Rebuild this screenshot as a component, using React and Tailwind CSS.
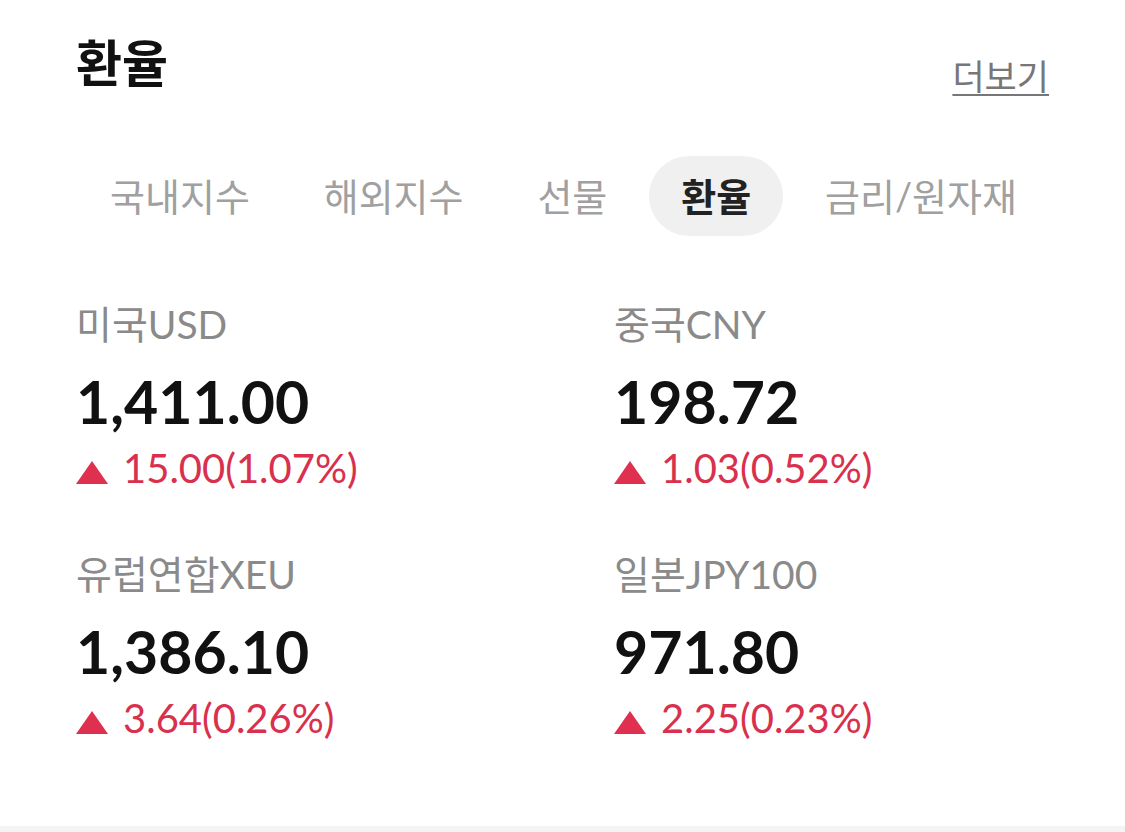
import React from 'react';

const tabs = ['국내지수', '해외지수', '선물', '환율', '금리/원자재'];

const rates = [
    { name: '미국USD', value: '1,411.00', change: '15.00(1.07%)' },
    { name: '중국CNY', value: '198.72', change: '1.03(0.52%)' },
    { name: '유럽연합XEU', value: '1,386.10', change: '3.64(0.26%)' },
    { name: '일본JPY100', value: '971.80', change: '2.25(0.23%)' },
];

const UpTriangle = () => (
    <svg width="32" height="23" viewBox="0 0 32 23" className="shrink-0 mt-[8px]">
        <path d="M16 0 L32 23 L0 23 Z" fill="#e0304f" />
    </svg>
);

export default function App() {
    return (
        <div className="w-full h-[832px] bg-white flex flex-col font-['Lato','Noto_Sans_CJK_KR',sans-serif]">
            <div className="flex-1 px-[76px]">
                {/* header */}
                <div className="flex justify-between items-start pt-[33px]">
                    <h1 className="text-[50px] font-bold leading-[60px] text-[#111]">환율</h1>
                    <a className="mt-[23px] text-[35px] leading-[40px] text-[#777] underline underline-offset-[4px] decoration-[2px]">더보기</a>
                </div>

                {/* tabs */}
                <div className="flex justify-between mt-[60px] pl-[2px]">
                    {tabs.map((t) => (
                        <div
                            key={t}
                            className={`h-[80px] px-[32px] flex items-center rounded-full text-[38px] ${t === '환율' ? 'bg-[#f0f0f0] text-[#222] font-bold' : 'text-[#a0a0a0]'}`}
                        >
                            {t}
                        </div>
                    ))}
                </div>

                {/* rates */}
                <div className="grid grid-cols-[538px_1fr] gap-y-[59px] mt-[63px]">
                    {rates.map((r) => (
                        <div key={r.name} className="flex flex-col">
                            <div className="text-[39px] leading-[50px] text-[#8a8a8a]">{r.name}</div>
                            <div className="mt-[21px] text-[59px] leading-[64px] font-bold text-[#111]">{r.value}</div>
                            <div className="mt-[12px] flex items-center gap-[15px] text-[40px] leading-[44px] text-[#d8304d]">
                                <UpTriangle />
                                <span>{r.change}</span>
                            </div>
                        </div>
                    ))}
                </div>
            </div>
            <div className="h-[6px] bg-[#f4f4f4]" />
        </div>
    );
}
